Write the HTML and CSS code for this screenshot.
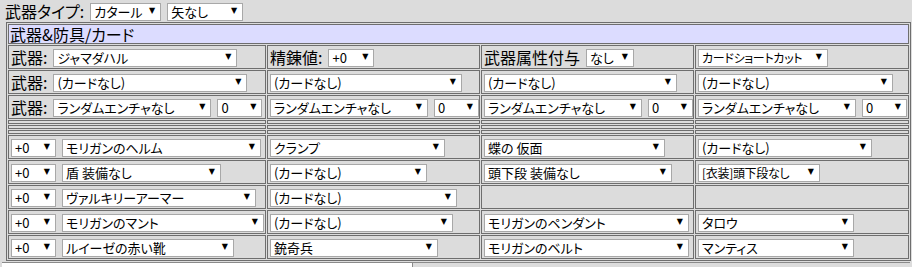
FILE: index.html
```html
<!DOCTYPE html>
<html lang="ja">
<head>
    <meta charset="UTF-8">
    <title>武器&amp;防具/カード</title>
    <link rel="stylesheet" href="styles.css">
</head>
<body>
    <div class="typebar">
        <span class="label">武器タイプ:</span>
        <span class="sel w71"><select><option>カタール</option></select></span>
        <span class="sel w76"><select><option>矢なし</option></select></span>
    </div>

    <table class="equip">
        <colgroup>
            <col class="c1"><col class="c2"><col class="c3"><col class="c4">
        </colgroup>
        <tr><th colspan="4">武器&amp;防具/カード</th></tr>
        <tr>
            <td><div class="cell"><span class="label">武器:</span><span class="sel w184"><select><option>ジャマダハル</option></select></span></div></td>
            <td><div class="cell"><span class="label">精錬値:</span><span class="sel w46"><select><option>+0</option></select></span></div></td>
            <td><div class="cell"><span class="label">武器属性付与</span><span class="sel w48"><select><option>なし</option></select></span></div></td>
            <td><div class="cell"><span class="sel w130 tight"><select><option>カードショートカット</option></select></span></div></td>
        </tr>
        <tr>
            <td><div class="cell"><span class="label">武器:</span><span class="sel w194"><select><option>(カードなし)</option></select></span></div></td>
            <td><div class="cell"><span class="sel w192"><select><option>(カードなし)</option></select></span></div></td>
            <td><div class="cell"><span class="sel w193"><select><option>(カードなし)</option></select></span></div></td>
            <td><div class="cell"><span class="sel w195"><select><option>(カードなし)</option></select></span></div></td>
        </tr>
        <tr>
            <td><div class="cell"><span class="label">武器:</span><span class="sel w158"><select><option>ランダムエンチャなし</option></select></span><span class="sel w45"><select><option>0</option></select></span></div></td>
            <td><div class="cell"><span class="sel w158"><select><option>ランダムエンチャなし</option></select></span><span class="sel w45"><select><option>0</option></select></span></div></td>
            <td><div class="cell"><span class="sel w158"><select><option>ランダムエンチャなし</option></select></span><span class="sel w45"><select><option>0</option></select></span></div></td>
            <td><div class="cell"><span class="sel w158"><select><option>ランダムエンチャなし</option></select></span><span class="sel w45"><select><option>0</option></select></span></div></td>
        </tr>
        <tr class="thin"><td></td><td></td><td></td><td></td></tr>
        <tr class="thin"><td></td><td></td><td></td><td></td></tr>
        <tr class="thin"><td></td><td></td><td></td><td></td></tr>
        <tr>
            <td><div class="cell"><span class="sel w45"><select><option>+0</option></select></span><span class="sel w199"><select><option>モリガンのヘルム</option></select></span></div></td>
            <td><div class="cell"><span class="sel w175"><select><option>クランプ</option></select></span></div></td>
            <td><div class="cell"><span class="sel w181"><select><option>蝶の 仮面</option></select></span></div></td>
            <td><div class="cell"><span class="sel w174"><select><option>(カードなし)</option></select></span></div></td>
        </tr>
        <tr>
            <td><div class="cell"><span class="sel w45"><select><option>+0</option></select></span><span class="sel w159"><select><option>盾 装備なし</option></select></span></div></td>
            <td><div class="cell"><span class="sel w157"><select><option>(カードなし)</option></select></span></div></td>
            <td><div class="cell"><span class="sel w188"><select><option>頭下段 装備なし</option></select></span></div></td>
            <td><div class="cell"><span class="sel w122 tight"><select><option>[衣装]頭下段なし</option></select></span></div></td>
        </tr>
        <tr>
            <td><div class="cell"><span class="sel w45"><select><option>+0</option></select></span><span class="sel w194"><select><option>ヴァルキリーアーマー</option></select></span></div></td>
            <td><div class="cell"><span class="sel w187"><select><option>(カードなし)</option></select></span></div></td>
            <td><div class="cell"></div></td>
            <td><div class="cell"></div></td>
        </tr>
        <tr>
            <td><div class="cell"><span class="sel w45"><select><option>+0</option></select></span><span class="sel w202"><select><option>モリガンのマント</option></select></span></div></td>
            <td><div class="cell"><span class="sel w183"><select><option>(カードなし)</option></select></span></div></td>
            <td><div class="cell"><span class="sel w205"><select><option>モリガンのペンダント</option></select></span></div></td>
            <td><div class="cell"><span class="sel w156"><select><option>タロウ</option></select></span></div></td>
        </tr>
        <tr>
            <td><div class="cell"><span class="sel w45"><select><option>+0</option></select></span><span class="sel w172"><select><option>ルイーゼの赤い靴</option></select></span></div></td>
            <td><div class="cell"><span class="sel w168"><select><option>銃奇兵</option></select></span></div></td>
            <td><div class="cell"><span class="sel w205"><select><option>モリガンのベルト</option></select></span></div></td>
            <td><div class="cell"><span class="sel w156"><select><option>マンティス</option></select></span></div></td>
        </tr>
    </table>

    <div class="next">
        <div class="next-box"></div>
    </div>
</body>
</html>
```

FILE: styles.css
```css
body { margin: 0; padding: 2px; background: #dcdcdc; color: #000; font-family: "Noto Sans CJK JP", "DejaVu Sans", sans-serif; font-size: 13px; font-feature-settings: "palt"; }
.typebar { display: flex; align-items: center; gap: 6px; height: 18px; padding-left: 3px; }
.label { font-size: 16px; line-height: 18px; white-space: nowrap; }

.sel { display: inline-block; position: relative; flex: none; height: 18px; }
.sel select { appearance: none; -webkit-appearance: none; box-sizing: border-box; width: 100%; height: 18px; margin: 0; padding: 0 14px 0 3px; border: 1px solid #a8a8a8; border-radius: 0; background: #fff; color: #000; font-family: "Noto Sans CJK JP", sans-serif; font-feature-settings: "palt"; font-size: 13px; line-height: 16px; }
.sel.tight select { font-size: 12px; letter-spacing: -0.3px; padding-right: 18px; }
.sel::after { content: "\25BC"; position: absolute; right: 6px; top: 5px; font-family: "DejaVu Sans", sans-serif; font-size: 8px; line-height: 8px; color: #000; pointer-events: none; }

.equip { margin: 2px 0 0 4px; width: 905px; border: 1px solid #6e6e6e; border-spacing: 1px; table-layout: fixed; }
.equip .c1 { width: 258px; }
.equip .c2, .equip .c3 { width: 213px; }
.equip .c4 { width: 214px; }
.equip th { box-sizing: border-box; height: 20px; padding: 0 1px; background: #dcdcff; border: 1px solid #6e6e6e; text-align: left; font-weight: normal; font-size: 16px; line-height: 18px; }
.equip td { box-sizing: border-box; height: 24px; padding: 2px; border: 1px solid #6e6e6e; vertical-align: middle; }
.equip .thin td { height: 4px; padding: 0; }
.cell { display: flex; align-items: center; gap: 6px; height: 18px; white-space: nowrap; }

.next { margin-top: 1px; border-top: 1px solid #8a8a8a; height: 4px; }
.next-box { width: 410px; height: 4px; background: #fff; border-right: 1px solid #8a8a8a; }

.w45 { width: 45px; } .w46 { width: 46px; } .w48 { width: 48px; }
.w71 { width: 71px; } .w76 { width: 76px; } .w122 { width: 122px; } .w130 { width: 130px; }
.w156 { width: 156px; } .w157 { width: 157px; } .w158 { width: 158px; } .w159 { width: 159px; }
.w168 { width: 168px; } .w172 { width: 172px; } .w174 { width: 174px; } .w175 { width: 175px; }
.w181 { width: 181px; } .w183 { width: 183px; } .w184 { width: 184px; } .w187 { width: 187px; }
.w188 { width: 188px; } .w192 { width: 192px; } .w193 { width: 193px; } .w194 { width: 194px; }
.w195 { width: 195px; } .w199 { width: 199px; } .w202 { width: 202px; } .w205 { width: 205px; }
```
